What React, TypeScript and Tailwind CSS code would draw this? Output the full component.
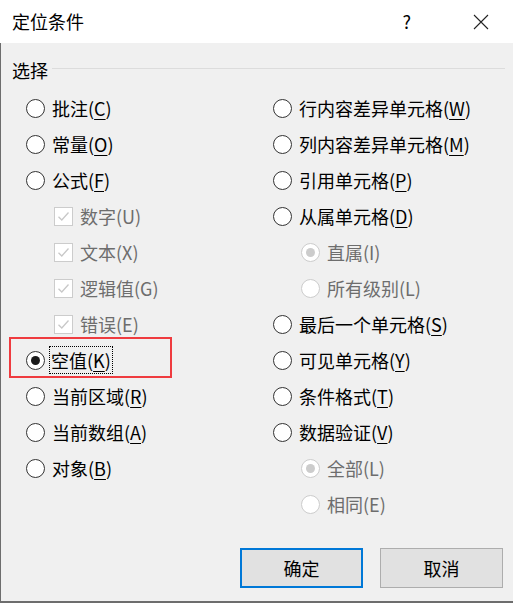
const font = { fontFamily: '"Noto Sans CJK SC", "Microsoft YaHei", sans-serif' }

type Item = {
	label: string
	key?: string
	kind: 'radio' | 'check'
	checked?: boolean
	disabled?: boolean
	indent?: boolean
	focus?: boolean
}

const left: Item[] = [
	{ label: '批注', key: 'C', kind: 'radio' },
	{ label: '常量', key: 'O', kind: 'radio' },
	{ label: '公式', key: 'F', kind: 'radio' },
	{ label: '数字(U)', kind: 'check', checked: true, disabled: true, indent: true },
	{ label: '文本(X)', kind: 'check', checked: true, disabled: true, indent: true },
	{ label: '逻辑值(G)', kind: 'check', checked: true, disabled: true, indent: true },
	{ label: '错误(E)', kind: 'check', checked: true, disabled: true, indent: true },
	{ label: '空值', key: 'K', kind: 'radio', checked: true, focus: true },
	{ label: '当前区域', key: 'R', kind: 'radio' },
	{ label: '当前数组', key: 'A', kind: 'radio' },
	{ label: '对象', key: 'B', kind: 'radio' },
]

const right: Item[] = [
	{ label: '行内容差异单元格', key: 'W', kind: 'radio' },
	{ label: '列内容差异单元格', key: 'M', kind: 'radio' },
	{ label: '引用单元格', key: 'P', kind: 'radio' },
	{ label: '从属单元格', key: 'D', kind: 'radio' },
	{ label: '直属(I)', kind: 'radio', checked: true, disabled: true, indent: true },
	{ label: '所有级别(L)', kind: 'radio', disabled: true, indent: true },
	{ label: '最后一个单元格', key: 'S', kind: 'radio' },
	{ label: '可见单元格', key: 'Y', kind: 'radio' },
	{ label: '条件格式', key: 'T', kind: 'radio' },
	{ label: '数据验证', key: 'V', kind: 'radio' },
	{ label: '全部(L)', kind: 'radio', checked: true, disabled: true, indent: true },
	{ label: '相同(E)', kind: 'radio', disabled: true, indent: true },
]

const Radio = ({ checked, disabled }: { checked?: boolean; disabled?: boolean }) => (
	<span className={`flex h-[19px] w-[19px] shrink-0 items-center justify-center rounded-full border bg-white ${disabled ? 'border-[#cccccc]' : 'border-[#333333]'}`}>
		{checked && <span className={`h-[9px] w-[9px] rounded-full ${disabled ? 'bg-[#cccccc]' : 'bg-[#1a1a1a]'}`} />}
	</span>
)

const Check = () => (
	<span className="flex h-[19px] w-[19px] shrink-0 items-center justify-center border border-[#cccccc] bg-white">
		<svg width="13" height="13" viewBox="0 0 13 13" fill="none">
			<path d="M1.5 6.8 L4.8 10 L11.5 2.5" stroke="#c8c8c8" strokeWidth="1.3" />
		</svg>
	</span>
)

const Row = ({ item }: { item: Item }) => (
	<div className={`flex h-9 items-center gap-[7px] ${item.indent ? 'pl-[28px]' : ''}`}>
		{item.kind === 'radio' ? <Radio checked={item.checked} disabled={item.disabled} /> : <Check />}
		<span
			className={`text-[18px] leading-none whitespace-nowrap ${item.disabled ? 'text-[#6d6d6d]' : 'text-black'} ${item.focus ? 'outline outline-1 outline-dotted outline-black px-[1px] py-[4px] -ml-[2px]' : ''}`}
		>
			{item.key ? (
				<>
					{item.label}(<span className="underline underline-offset-[3px]">{item.key}</span>)
				</>
			) : (
				item.label
			)}
		</span>
	</div>
)

const App = () => {
	return (
		<div style={font} className="relative flex h-[603px] w-[513px] flex-col overflow-hidden bg-[#f0f0f0] border-b-2 border-[#6d6d6d]">
			<div className="flex h-[43px] shrink-0 items-center bg-white pl-3 pr-[24px]">
				<span className="text-[18px] text-black">定位条件</span>
				<span className="ml-auto mr-[62px] text-[18px] text-black">?</span>
				<svg width="16" height="16" viewBox="0 0 16 16">
					<path d="M1 1 L15 15 M15 1 L1 15" stroke="#222" strokeWidth="1.1" />
				</svg>
			</div>

			<div className="flex flex-1 flex-col border-l border-[#6d6d6d]">
				<div className="mt-[15px] flex h-6 items-center pl-[11px] pr-2">
					<span className="text-[18px] text-black">选择</span>
					<div className="ml-1 h-px flex-1 -translate-y-[2px] bg-[#dcdcdc]" />
				</div>

				<div className="mt-[8px] flex pl-[25px]">
					<div className="w-[247px]">
						{left.map((it) => (
							<Row key={it.label} item={it} />
						))}
					</div>
					<div className="flex-1">
						{right.map((it) => (
							<Row key={it.label} item={it} />
						))}
					</div>
				</div>

				<div className="mt-[26px] flex justify-end gap-[17px] pr-[10px]">
					<button className="flex h-10 w-[123px] items-center justify-center border-2 border-[#0078d7] bg-[#e1e1e1] text-[18px] text-black">
						确定
					</button>
					<button className="flex h-10 w-[123px] items-center justify-center border border-[#adadad] bg-[#e1e1e1] text-[18px] text-black">
						取消
					</button>
				</div>
			</div>

			<div className="pointer-events-none absolute left-[9px] top-[337px] h-[41px] w-[163px] border-2 border-[#ef3b3f]" />
		</div>
	)
}

export default App
